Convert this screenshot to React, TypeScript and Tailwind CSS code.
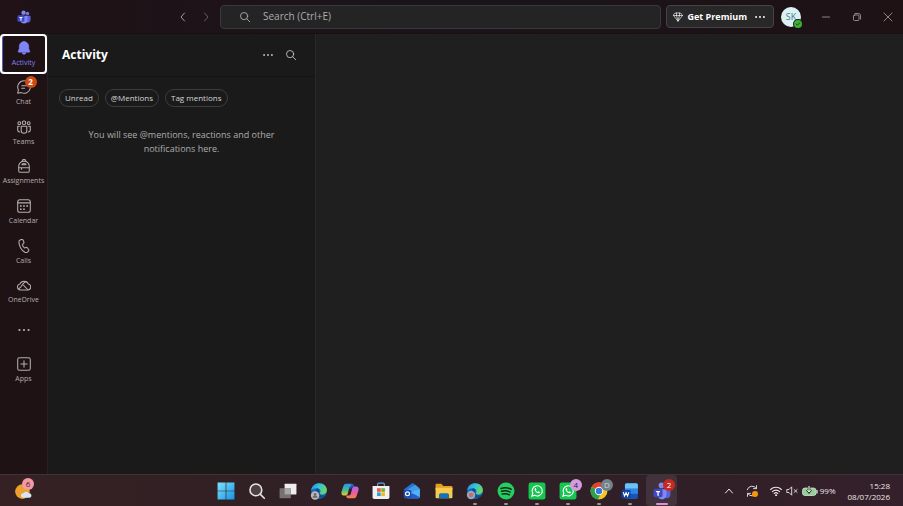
import type { ReactNode } from "react";

function TeamsLogo({ className }: { className?: string }) {
  return (
    <svg viewBox="0 0 32 32" className={className} aria-hidden="true">
      <circle cx="24" cy="8" r="4" fill="#6f78e6" />
      <circle cx="15" cy="6" r="5" fill="#8088f0" />
      <path d="M20 13h9a2 2 0 0 1 2 2v8a6 6 0 0 1-11 3z" fill="#5b5fd9" />
      <path d="M8 13h14a2 2 0 0 1 2 2v8a8 8 0 0 1-16 0z" fill="#7f88f2" />
      <rect x="1" y="12" width="16" height="15" rx="3" fill="#4148c4" />
      <path d="M5.500 16h7v2.200h-2.300v6.300H7.800v-6.300H5.500z" fill="#fff" />
    </svg>
  );
}

function Icon({ children, className = "size-4" }: { children: ReactNode; className?: string }) {
  return (
    <svg
      viewBox="0 0 20 20"
      className={className}
      fill="none"
      stroke="currentColor"
      strokeWidth="1.5"
      strokeLinecap="round"
      strokeLinejoin="round"
      aria-hidden="true"
    >
      {children}
    </svg>
  );
}

const SearchGlyph = ({ className }: { className?: string }) => (
  <Icon className={className}>
    <circle cx="8.500" cy="8.500" r="6" />
    <path d="M13 13 18 18" />
  </Icon>
);

const Dots = ({ className }: { className?: string }) => (
  <Icon className={className}>
    <g fill="currentColor" stroke="none">
      <circle cx="3.500" cy="10" r="1.600" />
      <circle cx="10" cy="10" r="1.600" />
      <circle cx="16.500" cy="10" r="1.600" />
    </g>
  </Icon>
);

const railItems = [
  {
    label: "Activity",
    icon: (
      <path
        d="M10 .8a6.800 6.800 0 0 0-6.800 6.800v3.600l-1.500 3.600a.8.8 0 0 0 .8 1.100h15a.8.8 0 0 0 .8-1.100l-1.500-3.600V7.600A6.800 6.800 0 0 0 10 .8zM7.300 17a2.800 2.800 0 0 0 5.400 0z"
        fill="currentColor"
        strokeWidth="0.8"
      />
    ),
  },
  {
    label: "Chat",
    badge: 2,
    icon: (
      <>
        <path d="M10 1a9 9 0 0 0-8 13L1 19l5-1a9 9 0 1 0 4-17z" />
        <path d="M6.800 8.300h6.400M6.800 11.800h4" />
      </>
    ),
  },
  {
    label: "Teams",
    icon: (
      <>
        <circle cx="10" cy="4" r="2.500" />
        <circle cx="3.300" cy="4.500" r="2" />
        <circle cx="16.700" cy="4.500" r="2" />
        <path d="M6 9h8v6a4 4 0 0 1-8 0z" />
        <path d="M3.500 9H1v5a3 3 0 0 0 3 3M16.500 9H19v5a3 3 0 0 1-3 3" />
      </>
    ),
  },
  {
    label: "Assignments",
    icon: (
      <>
        <path d="M7.500 3.500V2.700a2.500 2 0 0 1 5 0v.8" />
        <path d="M2.500 10a7.500 7 0 0 1 15 0v7a2 2 0 0 1-2 2h-11a2 2 0 0 1-2-2z" />
        <path d="M2.500 12.500h15M7 8.300a3 2 0 0 1 6 0zM6.500 12.500v2" />
      </>
    ),
  },
  {
    label: "Calendar",
    icon: (
      <>
        <rect x="1" y="1" width="18" height="18" rx="3" />
        <path d="M1 5.500h18" />
        <g fill="currentColor" stroke="none">
          <circle cx="5.500" cy="10" r="1.300" />
          <circle cx="10" cy="10" r="1.300" />
          <circle cx="14.500" cy="10" r="1.300" />
          <circle cx="5.500" cy="14.500" r="1.300" />
          <circle cx="10" cy="14.500" r="1.300" />
        </g>
      </>
    ),
  },
  {
    label: "Calls",
    icon: (
      <path d="M5 1.200l1.500-.5a1.900 1.900 0 0 1 2.300 1.100l1 2.500a1.900 1.900 0 0 1-.4 2L7.700 8c.3 1.600 1.400 3.500 2.900 4.800l2.300-.7a1.900 1.900 0 0 1 2.100.7l1.500 2.200a1.900 1.900 0 0 1-.2 2.400l-1 1c-1.100 1-2.700 1.200-4 .6C6.800 16.800 3 10.500 2.700 4.500c-.1-1.500.9-2.800 2.300-3.300z" />
    ),
  },
  {
    label: "OneDrive",
    icon: (
      <>
        <path d="M5 17h10.500a4.200 4.200 0 0 0 .8-8.300A6.700 6.700 0 0 0 4 8.700 4.200 4.200 0 0 0 5 17z" />
        <path d="M2.500 15.500C6.500 14.500 8 5.500 13.500 5M9.500 10.500l6 6.300" />
      </>
    ),
  },
];

function Rail() {
  return (
    <nav aria-label="App bar" className="flex w-12 shrink-0 flex-col border-r border-[#2a1e21] bg-[#1e1215] text-[#b5adae]">
      <ul className="grid h-[277px] grid-rows-7">
        {railItems.map((item, i) => (
          <li key={item.label} className="flex">
            <button
              className={`flex w-full flex-col items-center justify-center gap-0.5 border-2 pt-0.5 ${
                i === 0
                  ? "rounded-sm border-white text-[#7f85f5] shadow-[inset_1px_0_0_#5b5fc7]"
                  : "border-transparent"
              }`}
            >
              <span className="relative">
                <Icon className="size-3.5">{item.icon}</Icon>
                {item.badge && (
                  <span className="absolute -top-1 -right-1.5 flex size-3 items-center justify-center rounded-full bg-[#cc4a12] text-[8px] font-bold text-white">
                    {item.badge}
                  </span>
                )}
              </span>
              <span className="text-[7px] leading-3">{item.label}</span>
            </button>
          </li>
        ))}
      </ul>
      <button aria-label="View more apps" className="flex h-[38px] items-center justify-center">
        <Dots className="size-3.5" />
      </button>
      <button className="flex h-11 flex-col items-center justify-center gap-0.5">
        <Icon className="size-3.5">
          <rect x="1" y="1" width="18" height="18" rx="2.500" />
          <path d="M10 5.500v9M5.500 10h9" />
        </Icon>
        <span className="text-[7px] leading-3">Apps</span>
      </button>
    </nav>
  );
}

function TitleBar() {
  return (
    <header className="flex h-[33px] shrink-0 items-center bg-linear-to-r from-[#201216] via-[#19141a] to-[#1e1215] text-[#adadad]">
      <div className="flex w-[220px] shrink-0 items-center">
        <div className="flex w-12 justify-center">
          <TeamsLogo className="size-3.5" />
        </div>
        <div className="mr-1.5 ml-auto flex gap-[7px]">
          <button aria-label="Back" className="flex size-4 items-center justify-center">
            <Icon className="size-2.5"><path d="M13 2 6 10l7 8" strokeWidth="1.8" /></Icon>
          </button>
          <button aria-label="Forward" className="flex size-4 items-center justify-center text-[#6c6668]">
            <Icon className="size-2.5"><path d="M7 2l7 8-7 8" strokeWidth="1.8" /></Icon>
          </button>
        </div>
      </div>
      <label className="flex h-6 min-w-0 flex-1 items-center gap-3 rounded border border-[#3a383a] bg-[#252425] pl-[18px]">
        <SearchGlyph className="size-3 shrink-0" />
        <input
          aria-label="Search"
          placeholder="Search (Ctrl+E)"
          className="w-full bg-transparent text-[10px] outline-none placeholder:text-[#adadad]"
        />
      </label>
      <div className="ml-[5px] flex h-[23px] shrink-0 items-center rounded border border-[#454345] bg-[#292829] text-white">
        <button className="flex items-center gap-[5px] pl-1.5 text-[9px] font-bold whitespace-nowrap">
          <Icon className="size-2.5">
            <path d="M5 2h10l4 5-9 11.500L1 7zM1 7h18M7 7l3 11M13 7l-3 11M7 7V2M13 7V2" strokeWidth="1.3" />
          </Icon>
          Get Premium
        </button>
        <button aria-label="More options" className="px-[7px]">
          <Dots className="size-3" />
        </button>
      </div>
      <button aria-label="Account" className="relative ml-[7px] flex size-5 shrink-0 items-center justify-center rounded-full bg-[#dcf1f3] text-[9px] text-[#3e7f88]">
        SK
        <span className="absolute right-0 bottom-0 flex size-2 translate-x-px translate-y-px items-center justify-center rounded-full bg-[#3db134] text-[#123f10] ring-1 ring-[#1e1215]">
          <Icon className="size-1.5"><path d="M4 10l4 4 8-8" strokeWidth="3" /></Icon>
        </span>
      </button>
      <div className="ml-[9px] flex shrink-0">
        <button aria-label="Minimize" className="flex w-[31px] justify-center">
          <Icon className="size-2.5"><path d="M3 10h14" /></Icon>
        </button>
        <button aria-label="Restore" className="flex w-[31px] justify-center">
          <Icon className="size-2.5">
            <rect x="3" y="6" width="11" height="11" rx="2" />
            <path d="M6 3h7a4 4 0 0 1 4 4v7" />
          </Icon>
        </button>
        <button aria-label="Close" className="flex w-[31px] justify-center">
          <Icon className="size-2.5"><path d="M2 2l16 16M18 2 2 18" /></Icon>
        </button>
      </div>
    </header>
  );
}

function ActivityPanel() {
  return (
    <section className="w-[268px] shrink-0 border-r border-[#282828] bg-[#1a1a1a]">
      <div className="flex h-[43px] items-center border-b border-[#141414] pr-[18px] pl-3.5">
        <h1 className="text-[12px] font-bold text-white">Activity</h1>
        <div className="ml-auto flex items-center gap-[11px] text-[#c0c0c0]">
          <button aria-label="More options"><Dots className="size-3" /></button>
          <button aria-label="Filter"><SearchGlyph className="size-3" /></button>
        </div>
      </div>
      <div className="flex gap-1.5 px-[11px] pt-3">
        {["Unread", "@Mentions", "Tag mentions"].map((name) => (
          <button key={name} className="h-[18px] rounded-full border border-[#3d3d3d] px-[5px] text-[8px] text-[#d6d6d6]">
            {name}
          </button>
        ))}
      </div>
      <p className="px-8 pt-[21px] text-center text-[9px] leading-3.5 text-[#adadad]">
        You will see @mentions, reactions and other notifications here.
      </p>
    </section>
  );
}

function Edge() {
  return (
    <>
      <defs>
        <linearGradient id="edge-top" x1="0" y1="0" x2="1" y2="0.4">
          <stop offset="0" stopColor="#1b8fdf" />
          <stop offset="0.5" stopColor="#35c1d8" />
          <stop offset="1" stopColor="#66d66b" />
        </linearGradient>
      </defs>
      <circle cx="16" cy="16" r="14" fill="#1669bd" />
      <path d="M2 15C3 7 9 2 16 2c8 0 14 5 14 12 0 5-4 8-9 8-3 0-4-1-3-3 2-4-1-8-6-8-5 0-9 2-10 4z" fill="url(#edge-top)" />
      <path d="M12 12c-5 5-1 14 7 16 4 0 7-2 9-5-5 2-11 1-12-4 0-2 1-4 0-6-1-1-3-2-4-1z" fill="#124a91" />
    </>
  );
}

const WhatsApp = () => (
  <>
    <rect x="1" y="1" width="30" height="30" rx="4" fill="#15c750" />
    <path d="M7 25l1.500-5A9 9 0 1 1 12 23.600z" fill="none" stroke="#fff" strokeWidth="2" />
    <path d="M12.500 11c-2 2 0 5 2 7s5 3 6.500 1c.5-1 0-1.500-2.500-2.500l-1.300 1.200c-1.500-.6-2.700-1.800-3.200-3.200l1-1.300c-1-2.200-1.500-3-2.500-2.200z" fill="#fff" />
  </>
);

const taskbarApps: { name: string; art: ReactNode; open?: boolean; active?: boolean; badge?: string; badgeClass?: string }[] = [
  {
    name: "Start",
    art: (
      <>
        <defs>
          <linearGradient id="start" x1="0" y1="0" x2="1" y2="1">
            <stop offset="0" stopColor="#7fe2fb" />
            <stop offset="1" stopColor="#1492e6" />
          </linearGradient>
        </defs>
        <path d="M1 1h14.400v14.400H1zM16.600 1H31v14.400H16.600zM1 16.600h14.400V31H1zM16.600 16.600H31V31H16.600z" fill="url(#start)" />
      </>
    ),
  },
  {
    name: "Search",
    art: (
      <g fill="#4b4043" stroke="#e8e2e4" strokeWidth="2.800" strokeLinecap="round">
        <circle cx="14" cy="14" r="10.500" />
        <path d="M22 22l7 7" />
      </g>
    ),
  },
  {
    name: "Task view",
    art: (
      <>
        <rect x="10" y="3" width="21" height="19" rx="1" fill="#eee" />
        <rect x="1" y="11" width="20" height="18" rx="1" fill="#777173" />
        <rect x="10" y="11" width="11" height="11" fill="#aaa6a8" />
      </>
    ),
  },
  {
    name: "Edge",
    art: (
      <>
        <Edge />
        <circle cx="9" cy="24" r="7.500" fill="#bdb8b5" />
        <circle cx="9" cy="22" r="2.500" fill="#6c6865" />
        <path d="M4.500 28a4.500 4 0 0 1 9 0z" fill="#6c6865" />
      </>
    ),
  },
  {
    name: "Copilot",
    art: (
      <>
        <defs>
          <linearGradient id="copilot-left" x1="0" y1="0" x2="0" y2="1">
            <stop offset="0" stopColor="#2395f2" />
            <stop offset="0.6" stopColor="#4fbf83" />
            <stop offset="1" stopColor="#f2c52e" />
          </linearGradient>
          <linearGradient id="copilot-right" x1="0" y1="0" x2="0" y2="1">
            <stop offset="0" stopColor="#a66bef" />
            <stop offset="0.5" stopColor="#e75ba8" />
            <stop offset="1" stopColor="#f58248" />
          </linearGradient>
        </defs>
        <path d="M9 3h10c3 0 3 2 4 5h-5c-2 0-3 1-3.500 3L12 21c-.7 2-2 3-4 3H5c-4 0-5-3-4-7l3-9c1-3 2-5 5-5z" fill="url(#copilot-left)" />
        <path d="M23 29H13c-3 0-3-2-4-5h5c2 0 3-1 3.500-3L20 11c.7-2 2-3 4-3h3c4 0 5 3 4 7l-3 9c-1 3-2 5-5 5z" fill="url(#copilot-right)" />
        <path d="M18 3c3 0 4 2 5 5-3 0-4 1-4.500 3L18 12h-3.500C15 10 16 8 18 8z" fill="#2356cf" />
      </>
    ),
  },
  {
    name: "Microsoft Store",
    art: (
      <>
        <path d="M10 8V4a2 2 0 0 1 2-2h8a2 2 0 0 1 2 2v4" fill="none" stroke="#5da8dc" strokeWidth="2" />
        <path d="M1 7h30v20a3 3 0 0 1-3 3H4a3 3 0 0 1-3-3z" fill="#f0f1f3" />
        <path d="M9 11h6.500v6.500H9z" fill="#ed5a32" />
        <path d="M16.500 11H23v6.500h-6.500z" fill="#74b62c" />
        <path d="M9 18.500h6.500V25H9z" fill="#2b9ee0" />
        <path d="M16.500 18.500H23V25h-6.500z" fill="#f5b81d" />
      </>
    ),
  },
  {
    name: "Outlook",
    art: (
      <>
        <path d="M2 13 15 3c1.500-1 2.500-1 4 0l11 9v14a3 3 0 0 1-3 3H5a3 3 0 0 1-3-3z" fill="#2472d8" />
        <path d="M9 13 22 5l7 6-15 11z" fill="#3f9bea" />
        <path d="M11 19 30 12v14a3 3 0 0 1-3 3H8z" fill="#55b2f5" />
        <path d="M17 20l13 7a3 3 0 0 1-3 2H6z" fill="#245ed0" />
        <rect x="1" y="14" width="14" height="14" rx="3" fill="#194ba9" />
        <circle cx="8" cy="21" r="3.500" fill="none" stroke="#fff" strokeWidth="2" />
      </>
    ),
  },
  {
    name: "File Explorer",
    art: (
      <>
        <path d="M1 5a2 2 0 0 1 2-2h8l4 4h14a2 2 0 0 1 2 2v5H1z" fill="#e59e20" />
        <path d="M1 10h30v17a2 2 0 0 1-2 2H3a2 2 0 0 1-2-2z" fill="#f9cb4c" />
        <path d="M7 29v-6a3 3 0 0 1 3-3h12a3 3 0 0 1 3 3v6z" fill="#1572b8" />
      </>
    ),
  },
  {
    name: "Edge profile",
    open: true,
    art: (
      <>
        <Edge />
        <circle cx="9" cy="23" r="7.500" fill="#8eaac2" />
        <circle cx="9" cy="23" r="4" fill="#cb6b62" />
      </>
    ),
  },
  {
    name: "Spotify",
    open: true,
    art: (
      <>
        <circle cx="16" cy="16" r="15" fill="#23cf5f" />
        <path d="M7 11.500c6-2 13-1.300 18.500 1.500M8 16.500c5-1.500 11-1 15.500 1.500M9 21.500c4.500-1.200 9-.7 13 1.300" fill="none" stroke="#16241b" strokeWidth="2.500" strokeLinecap="round" />
      </>
    ),
  },
  { name: "WhatsApp", open: true, art: <WhatsApp /> },
  { name: "WhatsApp chats", open: true, badge: "4", badgeClass: "bg-[#d59be0] text-[#2d1b30]", art: <WhatsApp /> },
  {
    name: "Chrome",
    open: true,
    badge: "D",
    badgeClass: "bg-[#738189] text-[#c9d3d8]",
    art: (
      <>
        <circle cx="16" cy="16" r="15" fill="#f6c522" />
        <path d="M16 16 3 8.500a15 15 0 0 1 26 0z" fill="#e3402e" />
        <path d="M16 16 3 8.500A15 15 0 0 0 14 31l6-11z" fill="#2ca14c" />
        <circle cx="16" cy="16" r="7.500" fill="#fff" />
        <circle cx="16" cy="16" r="5.800" fill="#3579e0" />
      </>
    ),
  },
  {
    name: "Word",
    open: true,
    art: (
      <>
        <rect x="7" y="2" width="23" height="28" rx="3" fill="#1756b9" />
        <path d="M7 12h23V5a3 3 0 0 0-3-3H10a3 3 0 0 0-3 3z" fill="#6cc2f7" />
        <path d="M7 12h23v9H7z" fill="#2c86e3" />
        <rect x="1" y="14" width="16" height="15" rx="2" fill="#1242a0" />
        <path d="M4 18l2.300 7L9 19l2.700 6L14 18" fill="none" stroke="#fff" strokeWidth="2" />
      </>
    ),
  },
  { name: "Teams", open: true, active: true, badge: "2", badgeClass: "bg-[#c52a22] text-white", art: <TeamsLogo /> },
];

function Taskbar() {
  return (
    <footer className="flex h-8 shrink-0 items-stretch border-t border-[#3e3335] bg-linear-to-r from-[#352123] via-[#2e1f25] to-[#34202a] text-[#ece6e8]">
      <div className="flex w-[210px] shrink-0 items-center pl-3.5">
        <button aria-label="Widgets" className="relative">
          <svg viewBox="0 0 32 32" className="size-[18px]" aria-hidden="true">
            <circle cx="15" cy="17" r="13" fill="#eda02b" />
            <path d="M16 28a4 4 0 0 1 .5-8 6 6 0 0 1 10 0 4 4 0 0 1 1 8z" fill="#d6e5f8" />
          </svg>
          <span className="absolute -top-1 -right-0.5 flex size-3 items-center justify-center rounded-full bg-[#f29aa3] text-[8px] text-[#4c2028]">
            6
          </span>
        </button>
      </div>
      <div className="flex w-[467px] shrink-0">
        {taskbarApps.map((app) => (
          <button
            key={app.name}
            aria-label={app.name}
            className={`relative flex flex-1 items-center justify-center ${
              app.active ? "rounded bg-[#42323b]" : ""
            }`}
          >
            <svg viewBox="0 0 32 32" className="size-[18px]" aria-hidden="true">
              {app.art}
            </svg>
            {app.badge && (
              <span className={`absolute top-1 right-0.5 flex size-3 items-center justify-center rounded-full text-[8px] ${app.badgeClass}`}>
                {app.badge}
              </span>
            )}
            {app.open && (
              <span className={`absolute bottom-px h-0.5 rounded-full ${app.active ? "w-3 bg-[#e08fd6]" : "w-1 bg-[#9d9295]"}`} />
            )}
          </button>
        ))}
      </div>
      <div className="ml-auto flex items-center pr-[13px]">
        <button aria-label="Show hidden icons" className="mr-3">
          <Icon className="size-2.5"><path d="M3 14l7-8 7 8" strokeWidth="2" /></Icon>
        </button>
        <button aria-label="Updates" className="relative mr-3">
          <Icon className="size-3">
            <path d="M2 8a8.500 8.500 0 0 1 15-2.500M17.500 1v5h-5M18 12a8.500 8.500 0 0 1-15 2.500M2.500 19v-5h5" />
          </Icon>
          <span className="absolute right-0 bottom-0 size-1.5 rounded-full bg-[#f7960d]" />
        </button>
        <button className="mr-3 flex items-center gap-1 text-[8px]">
          <Icon className="size-3">
            <path d="M1 7.500a13 13 0 0 1 18 0M4 11a8.500 8.500 0 0 1 12 0M7 14a4.500 4.500 0 0 1 6 0" strokeWidth="1.8" />
            <circle cx="10" cy="17" r="1" fill="currentColor" />
          </Icon>
          <Icon className="size-3">
            <path d="M2 7.500h3L9.500 3v14L5 12.500H2zM13.500 7.500l5 5M18.500 7.500l-5 5" />
          </Icon>
          <svg viewBox="0 0 32 20" className="h-2.5 w-4" aria-hidden="true">
            <rect x="1" y="4" width="27" height="15" rx="5" fill="#94cf98" stroke="#d8ead9" strokeWidth="1.500" />
            <path d="M30 9v5" stroke="#d8ead9" strokeWidth="2.500" strokeLinecap="round" />
            <path d="M14 0v10M10 7l4 5 4-5" fill="none" stroke="#26352a" strokeWidth="5" />
            <path d="M14 0v10M10 7l4 5 4-5" fill="none" stroke="#fff" strokeWidth="2" />
          </svg>
          <span className="-ml-0.5">99%</span>
        </button>
        <button className="text-right text-[8px] leading-[11px]">
          <time dateTime="2026-07-08T15:28">
            15:28
            <br />
            08/07/2026
          </time>
        </button>
      </div>
    </footer>
  );
}

export default function App() {
  return (
    <div className="flex min-h-screen flex-col bg-[#1f1f1f] font-['Open_Sans','Noto_Sans',sans-serif]">
      <TitleBar />
      <div className="flex flex-1 items-stretch border-t border-[#19100f]">
        <Rail />
        <ActivityPanel />
        <main className="flex-1 bg-[#1f1f1f]" />
      </div>
      <Taskbar />
    </div>
  );
}
